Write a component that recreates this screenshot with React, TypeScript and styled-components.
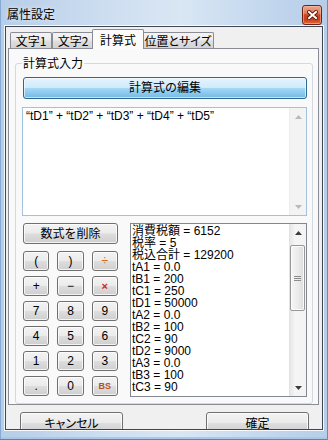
import React from "react";
import styled, { createGlobalStyle } from "styled-components";

const FONT = `"Liberation Sans", "Noto Sans CJK JP", sans-serif`;

const Global = createGlobalStyle`
  html, body { margin: 0; padding: 0; background: #ffffff; }
  body { font-family: ${FONT}; font-size: 12px; color: #000; }
  * { box-sizing: border-box; }
`;

const Window = styled.div`
  width: 328px;
  height: 440px;
  display: flex;
  flex-direction: column;
  overflow: hidden;
  background: linear-gradient(to right, #b6cde8 0%, #cfdff1 35%, #d9e6f4 55%, #c4d8ee 80%, #b6cde8 100%);
  box-shadow: inset -1px 0 0 #35a3cf, inset 0 -1px 0 #3a8fd2, inset 1px 0 0 #86aad4, inset 0 -3px 0 #a8c8e8;
`;

const TitleBar = styled.div`
  height: 26px;
  flex: none;
  display: flex;
  align-items: flex-start;
  justify-content: space-between;
  padding: 0 6px 0 7px;
`;

const Title = styled.span`
  margin-top: 7px;
  font-family: "Noto Sans CJK JP", sans-serif;
  font-size: 12px;
  line-height: 14px;
  color: #000;
  text-shadow: 0 0 5px rgba(255, 255, 255, 0.9);
`;

const CloseButton = styled.div`
  margin-top: 5px;
  width: 20px;
  height: 20px;
  border: 1px solid #6b2414;
  border-radius: 3px;
  background: linear-gradient(#eda68c 0%, #e07d5c 40%, #cb4420 50%, #c9401c 75%, #e06a3c 100%);
  box-shadow: inset 0 0 0 1px rgba(255, 200, 180, 0.5);
  display: flex;
  align-items: center;
  justify-content: center;
`;

const Client = styled.div`
  flex: 1;
  margin: 0 5px 10px 5px;
  background: #f0f0f0;
  border: 1px solid #3d4652;
  box-shadow: 0 0 0 1px rgba(255, 255, 255, 0.85);
  padding: 0 3px 0 2px;
  overflow: hidden;
  display: flex;
  flex-direction: column;
`;

const TabStrip = styled.div`
  height: 21px;
  flex: none;
  display: flex;
  align-items: flex-end;
  padding-left: 2px;
`;

const Tab = styled.div<{ $active?: boolean; $w: number }>`
  width: ${(p) => p.$w}px;
  height: ${(p) => (p.$active ? 20 : 16)}px;
  margin: ${(p) => (p.$active ? "0 -2px -1px -2px" : "0")};
  position: relative;
  z-index: ${(p) => (p.$active ? 2 : 1)};
  border: 1px solid #898c95;
  border-bottom: none;
  border-radius: 2px 2px 0 0;
  background: ${(p) =>
    p.$active ? "#fbfbfb" : "linear-gradient(#f4f4f4 0%, #ececec 45%, #dedede 55%, #d3d3d3 100%)"};
  display: flex;
  justify-content: center;
  align-items: center;
  padding-top: ${(p) => (p.$active ? 0 : 1)}px;
  font-family: "Noto Sans CJK JP", sans-serif;
  font-feature-settings: "palt";
  font-size: 12px;
  line-height: 14px;
  white-space: nowrap;
`;

const Panel = styled.div`
  height: 357px;
  flex: none;
  border: 1px solid #898c95;
  background: #f9f9f9;
  padding: 7px 5px 2px 6px;
  display: flex;
  flex-direction: column;
`;

const Group = styled.fieldset`
  flex: 1;
  margin: 0;
  min-width: 0;
  border: 1px solid #d3d9de;
  border-radius: 3px;
  padding: 7px 5px 6px 6px;
  display: flex;
  flex-direction: column;
`;

const Legend = styled.legend`
  padding: 0 1px;
  font-family: "Noto Sans CJK JP", sans-serif;
  font-size: 12px;
  line-height: 14px;
  color: #000;
`;

const PrimaryButton = styled.div`
  height: 22px;
  flex: none;
  margin-left: 1px;
  border: 1px solid #2f6592;
  border-radius: 3px;
  background: linear-gradient(#e4f4fd 0%, #cfebfa 48%, #a4d7f4 52%, #72bae6 100%);
  box-shadow: inset 0 0 0 1px rgba(255, 255, 255, 0.6);
  display: flex;
  align-items: center;
  justify-content: center;
  font-size: 12px;
  line-height: 14px;
`;

const FormulaBox = styled.div`
  height: 109px;
  flex: none;
  margin-top: 8px;
  border: 1px solid #a2c1dd;
  background: #ffffff;
  display: flex;
`;

const FormulaText = styled.div`
  flex: 1;
  padding: 2px 3px;
  font-size: 12px;
  line-height: 13px;
  white-space: nowrap;
  overflow: hidden;
`;

const ScrollBar = styled.div<{ $disabled?: boolean }>`
  width: 17px;
  flex: none;
  display: flex;
  flex-direction: column;
  background: ${(p) =>
    p.$disabled ? "#f3f3f3" : "linear-gradient(to right, #e6e6e6 0%, #f5f5f5 30%, #f3f3f3 100%)"};
  border-left: 1px solid ${(p) => (p.$disabled ? "#ececec" : "#e3e3e3")};
`;

const ScrollArrow = styled.div`
  height: 17px;
  flex: none;
  display: flex;
  align-items: center;
  justify-content: center;
`;

const Track = styled.div`
  flex: 1;
  padding: 4px 1px 0 0;
`;

const Thumb = styled.div`
  height: 66px;
  border: 1px solid #979797;
  border-radius: 2px;
  background: linear-gradient(to right, #f6f6f6 0%, #ececec 50%, #dcdcdc 100%);
  box-shadow: inset 0 0 0 1px rgba(255, 255, 255, 0.8);
  display: flex;
  align-items: center;
  justify-content: center;
`;

const Bottom = styled.div`
  height: 174px;
  flex: none;
  margin-top: 7px;
  display: flex;
  gap: 12px;
`;

const LeftCol = styled.div`
  width: 95px;
  flex: none;
  margin-left: 1px;
  display: flex;
  flex-direction: column;
  gap: 7px;
`;

const Button = styled.div<{ $h?: number }>`
  height: ${(p) => p.$h ?? 20}px;
  border: 1px solid #707070;
  border-radius: 3px;
  background: linear-gradient(#f3f3f3 0%, #ebebeb 48%, #dddddd 52%, #cfcfcf 100%);
  box-shadow: inset 0 0 0 1px rgba(255, 255, 255, 0.75);
  display: flex;
  align-items: center;
  justify-content: center;
  font-size: 12px;
  line-height: 14px;
  white-space: nowrap;
`;

const Keypad = styled.div`
  display: grid;
  grid-template-columns: repeat(3, 1fr);
  grid-auto-rows: 20px;
  column-gap: 8px;
  row-gap: 5px;
`;

const KeyLabel = styled.span<{ $color?: string; $bold?: boolean; $size?: number }>`
  color: ${(p) => p.$color ?? "#000"};
  font-weight: ${(p) => (p.$bold ? 700 : 400)};
  font-size: ${(p) => p.$size ?? 12}px;
  line-height: 14px;
`;

const ResultList = styled.div`
  flex: 1;
  border: 1px solid #828790;
  background: #ffffff;
  display: flex;
  overflow: hidden;
`;

const ResultLines = styled.div`
  flex: 1;
  padding: 1px 0 0 1px;
  overflow: hidden;
`;

const ResultLine = styled.div`
  height: 12px;
  font-size: 12px;
  line-height: 12px;
  white-space: nowrap;
`;

const Footer = styled.div`
  flex: none;
  margin-top: 7px;
  padding: 0 10px 0 12px;
  display: flex;
  justify-content: space-between;
`;

const FooterButton = styled(Button)`
  width: 103px;
  height: 22px;
  font-family: "Noto Sans CJK JP", sans-serif;
  font-feature-settings: "palt";
`;

const Arrow = ({ up, color }: { up?: boolean; color: string }) => (
  <svg width="7" height="4" viewBox="0 0 7 4">
    <polygon points={up ? "0,4 3.5,0 7,4" : "0,0 7,0 3.5,4"} fill={color} />
  </svg>
);

const CloseGlyph = () => (
  <svg width="11" height="10" viewBox="0 0 11 10">
    <path d="M2 2 L9 8 M9 2 L2 8" stroke="#5a1a0e" strokeWidth="4" strokeLinecap="square" />
    <path d="M2 2 L9 8 M9 2 L2 8" stroke="#ffffff" strokeWidth="2" strokeLinecap="square" />
  </svg>
);

const Grip = () => (
  <svg width="7" height="7" viewBox="0 0 7 7">
    <path d="M0 1.5 H7 M0 3.5 H7 M0 5.5 H7" stroke="#8c8c8c" strokeWidth="1" />
  </svg>
);

type KeyDef = { label: string; color?: string; bold?: boolean; size?: number };

const keys: KeyDef[] = [
  { label: "(" },
  { label: ")" },
  { label: "÷", color: "#d06a1e" },
  { label: "+" },
  { label: "−" },
  { label: "×", color: "#c4242a", bold: true, size: 11 },
  { label: "7" },
  { label: "8" },
  { label: "9" },
  { label: "4" },
  { label: "5" },
  { label: "6" },
  { label: "1" },
  { label: "2" },
  { label: "3" },
  { label: "." },
  { label: "0" },
  { label: "BS", color: "#b8501a", bold: true, size: 9 },
];

const results = [
  "消費税額 = 6152",
  "税率 = 5",
  "税込合計 = 129200",
  "tA1 = 0.0",
  "tB1 = 200",
  "tC1 = 250",
  "tD1 = 50000",
  "tA2 = 0.0",
  "tB2 = 100",
  "tC2 = 90",
  "tD2 = 9000",
  "tA3 = 0.0",
  "tB3 = 100",
  "tC3 = 90",
];

const tabs = [
  { label: "文字1", w: 42 },
  { label: "文字2", w: 42 },
  { label: "計算式", w: 52, active: true },
  { label: "位置とサイズ", w: 72 },
];

export default function App() {
  return (
    <>
      <Global />
      <Window>
        <TitleBar>
          <Title>属性設定</Title>
          <CloseButton>
            <CloseGlyph />
          </CloseButton>
        </TitleBar>
        <Client>
          <TabStrip>
            {tabs.map((t) => (
              <Tab key={t.label} $w={t.w} $active={t.active}>
                {t.label}
              </Tab>
            ))}
          </TabStrip>
          <Panel>
            <Group>
              <Legend>計算式入力</Legend>
              <PrimaryButton>計算式の編集</PrimaryButton>
              <FormulaBox>
                <FormulaText>“tD1” + “tD2” + “tD3” + “tD4” + “tD5”</FormulaText>
                <ScrollBar $disabled>
                  <ScrollArrow>
                    <Arrow up color="#b9b9b9" />
                  </ScrollArrow>
                  <Track />
                  <ScrollArrow>
                    <Arrow color="#b9b9b9" />
                  </ScrollArrow>
                </ScrollBar>
              </FormulaBox>
              <Bottom>
                <LeftCol>
                  <Button $h={21}>数式を削除</Button>
                  <Keypad>
                    {keys.map((k, i) => (
                      <Button key={i}>
                        <KeyLabel $color={k.color} $bold={k.bold} $size={k.size}>
                          {k.label}
                        </KeyLabel>
                      </Button>
                    ))}
                  </Keypad>
                </LeftCol>
                <ResultList>
                  <ResultLines>
                    {results.map((r) => (
                      <ResultLine key={r}>{r}</ResultLine>
                    ))}
                  </ResultLines>
                  <ScrollBar>
                    <ScrollArrow>
                      <Arrow up color="#3c3c3c" />
                    </ScrollArrow>
                    <Track>
                      <Thumb>
                        <Grip />
                      </Thumb>
                    </Track>
                    <ScrollArrow>
                      <Arrow color="#3c3c3c" />
                    </ScrollArrow>
                  </ScrollBar>
                </ResultList>
              </Bottom>
            </Group>
          </Panel>
          <Footer>
            <FooterButton>キャンセル</FooterButton>
            <FooterButton>確定</FooterButton>
          </Footer>
        </Client>
      </Window>
    </>
  );
}
